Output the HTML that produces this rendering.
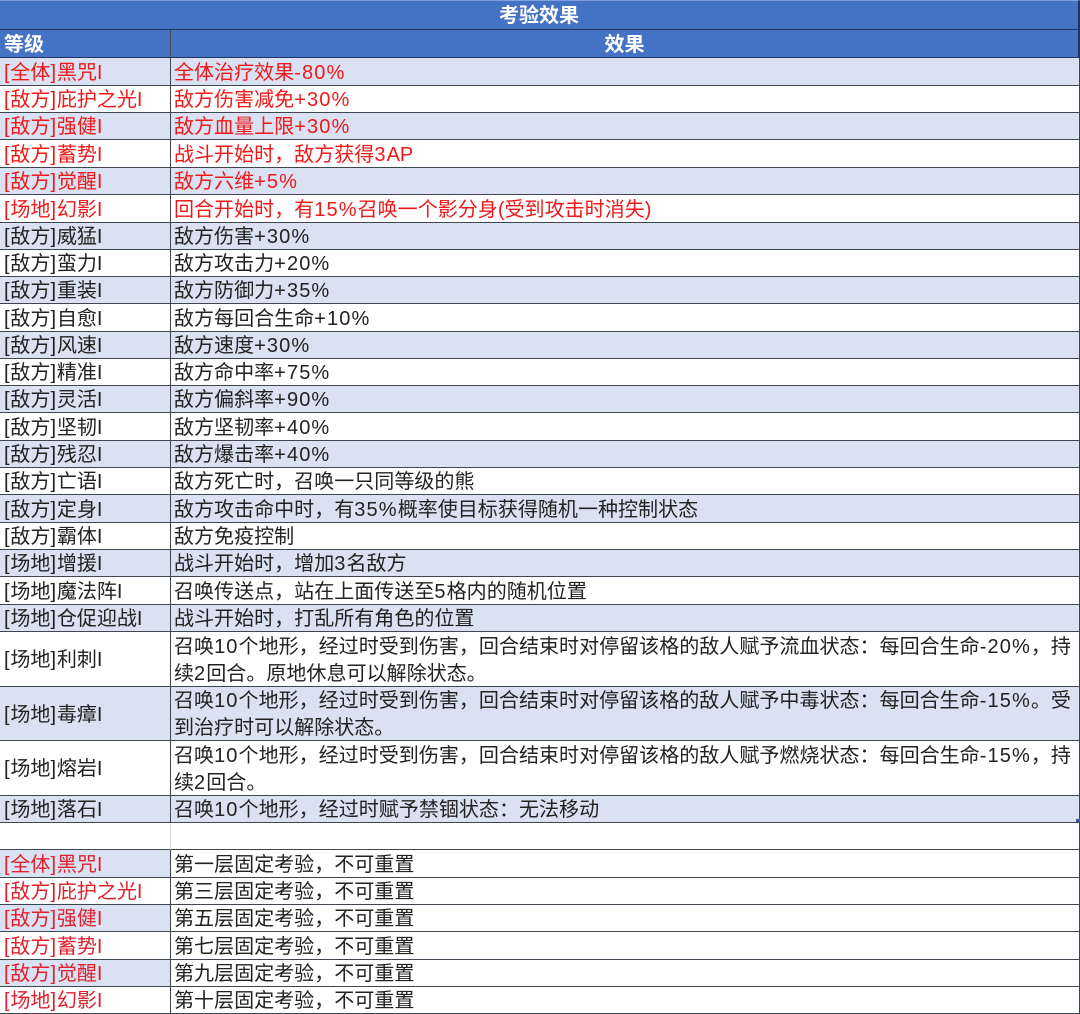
<!DOCTYPE html>
<html lang="zh-CN">
<head>
<meta charset="utf-8">
<title>考验效果</title>
<style>
html,body{margin:0;padding:0;background:#fff}
#t{width:1080px;height:1014px;overflow:hidden;display:grid;grid-template-columns:171px 909px;
grid-template-rows:30px 28px 28px 27px 27px 28px 27px 28px 27px 27px 27px 28px 27px 27px 27px 28px 27px 27px 28px 27px 27px 28px 27px 55px 54px 55px 27px 27px 28px 27px 27px 28px 27px 27px;
font-family:"Liberation Sans","Noto Sans CJK SC",sans-serif;font-size:20.05px;line-height:27px;color:#222;position:relative}
#t>div{box-sizing:border-box;border-bottom:1px solid #3f4650;display:flex;align-items:center;white-space:nowrap;overflow:visible;padding-left:3px;padding-top:3px}
.a{border-right:1px solid #3f4650}
#t>.a{padding-left:4px}
.b{border-right:1px solid #3f4650}
.u{background:#d9e1f2}
.r{color:#f01818}
.k{color:#e0202c}
i{font-style:normal;letter-spacing:1.1px}
.a i{letter-spacing:.8px}
#t>.h{background:#4472c4;color:#fff;font-weight:bold;border-bottom-color:#1f3560}
#t>.tt{grid-column:1/3;justify-content:center;padding-left:0;border-top:1px solid #7f9fdc;border-right:2px solid #1f3560}
#t>.c{justify-content:center;padding-left:0;border-right:2px solid #1f3560}
#t>.bl{border-right-color:#ddd}
#m{position:absolute;left:1076px;top:819px;width:4px;height:3px;background:#3f5aa8}
</style>
</head>
<body>
<div id="t">
<div class="h tt">考验效果</div>
<div class="h a">等级</div><div class="h c">效果</div>
<div class="a u r"><span><i>[</i>全体<i>]</i>黑咒I</span></div><div class="b u r"><span>全体治疗效果<i>-80%</i></span></div>
<div class="a r"><span><i>[</i>敌方<i>]</i>庇护之光I</span></div><div class="b r"><span>敌方伤害减免<i>+30%</i></span></div>
<div class="a u r"><span><i>[</i>敌方<i>]</i>强健I</span></div><div class="b u r"><span>敌方血量上限<i>+30%</i></span></div>
<div class="a r"><span><i>[</i>敌方<i>]</i>蓄势I</span></div><div class="b r"><span>战斗开始时，敌方获得<i>3</i>AP</span></div>
<div class="a u r"><span><i>[</i>敌方<i>]</i>觉醒I</span></div><div class="b u r"><span>敌方六维<i>+5%</i></span></div>
<div class="a r"><span><i>[</i>场地<i>]</i>幻影I</span></div><div class="b r"><span>回合开始时，有<i>15%</i>召唤一个影分身(受到攻击时消失)</span></div>
<div class="a u"><span><i>[</i>敌方<i>]</i>威猛I</span></div><div class="b u"><span>敌方伤害<i>+30%</i></span></div>
<div class="a"><span><i>[</i>敌方<i>]</i>蛮力I</span></div><div class="b"><span>敌方攻击力<i>+20%</i></span></div>
<div class="a u"><span><i>[</i>敌方<i>]</i>重装I</span></div><div class="b u"><span>敌方防御力<i>+35%</i></span></div>
<div class="a"><span><i>[</i>敌方<i>]</i>自愈I</span></div><div class="b"><span>敌方每回合生命<i>+10%</i></span></div>
<div class="a u"><span><i>[</i>敌方<i>]</i>风速I</span></div><div class="b u"><span>敌方速度<i>+30%</i></span></div>
<div class="a"><span><i>[</i>敌方<i>]</i>精准I</span></div><div class="b"><span>敌方命中率<i>+75%</i></span></div>
<div class="a u"><span><i>[</i>敌方<i>]</i>灵活I</span></div><div class="b u"><span>敌方偏斜率<i>+90%</i></span></div>
<div class="a"><span><i>[</i>敌方<i>]</i>坚韧I</span></div><div class="b"><span>敌方坚韧率<i>+40%</i></span></div>
<div class="a u"><span><i>[</i>敌方<i>]</i>残忍I</span></div><div class="b u"><span>敌方爆击率<i>+40%</i></span></div>
<div class="a"><span><i>[</i>敌方<i>]</i>亡语I</span></div><div class="b"><span>敌方死亡时，召唤一只同等级的熊</span></div>
<div class="a u"><span><i>[</i>敌方<i>]</i>定身I</span></div><div class="b u"><span>敌方攻击命中时，有<i>35%</i>概率使目标获得随机一种控制状态</span></div>
<div class="a"><span><i>[</i>敌方<i>]</i>霸体I</span></div><div class="b"><span>敌方免疫控制</span></div>
<div class="a u"><span><i>[</i>场地<i>]</i>增援I</span></div><div class="b u"><span>战斗开始时，增加<i>3</i>名敌方</span></div>
<div class="a"><span><i>[</i>场地<i>]</i>魔法阵I</span></div><div class="b"><span>召唤传送点，站在上面传送至<i>5</i>格内的随机位置</span></div>
<div class="a u"><span><i>[</i>场地<i>]</i>仓促迎战I</span></div><div class="b u"><span>战斗开始时，打乱所有角色的位置</span></div>
<div class="a"><span><i>[</i>场地<i>]</i>利刺I</span></div><div class="b"><span>召唤<i>10</i>个地形，经过时受到伤害，回合结束时对停留该格的敌人赋予流血状态：每回合生命<i>-20%</i>，持<br>续<i>2</i>回合。原地休息可以解除状态。</span></div>
<div class="a u"><span><i>[</i>场地<i>]</i>毒瘴I</span></div><div class="b u"><span>召唤<i>10</i>个地形，经过时受到伤害，回合结束时对停留该格的敌人赋予中毒状态：每回合生命<i>-15%</i>。受<br>到治疗时可以解除状态。</span></div>
<div class="a"><span><i>[</i>场地<i>]</i>熔岩I</span></div><div class="b"><span>召唤<i>10</i>个地形，经过时受到伤害，回合结束时对停留该格的敌人赋予燃烧状态：每回合生命<i>-15%</i>，持<br>续<i>2</i>回合。</span></div>
<div class="a u"><span><i>[</i>场地<i>]</i>落石I</span></div><div class="b u"><span>召唤<i>10</i>个地形，经过时赋予禁锢状态：无法移动</span></div>
<div class="a bl"></div><div class="b"></div>
<div class="a u k"><span><i>[</i>全体<i>]</i>黑咒I</span></div><div class="b">第一层固定考验，不可重置</div>
<div class="a k"><span><i>[</i>敌方<i>]</i>庇护之光I</span></div><div class="b">第三层固定考验，不可重置</div>
<div class="a u k"><span><i>[</i>敌方<i>]</i>强健I</span></div><div class="b">第五层固定考验，不可重置</div>
<div class="a k"><span><i>[</i>敌方<i>]</i>蓄势I</span></div><div class="b">第七层固定考验，不可重置</div>
<div class="a u k"><span><i>[</i>敌方<i>]</i>觉醒I</span></div><div class="b">第九层固定考验，不可重置</div>
<div class="a k"><span><i>[</i>场地<i>]</i>幻影I</span></div><div class="b">第十层固定考验，不可重置</div>
<div id="m"></div>
</div>
</body>
</html>
